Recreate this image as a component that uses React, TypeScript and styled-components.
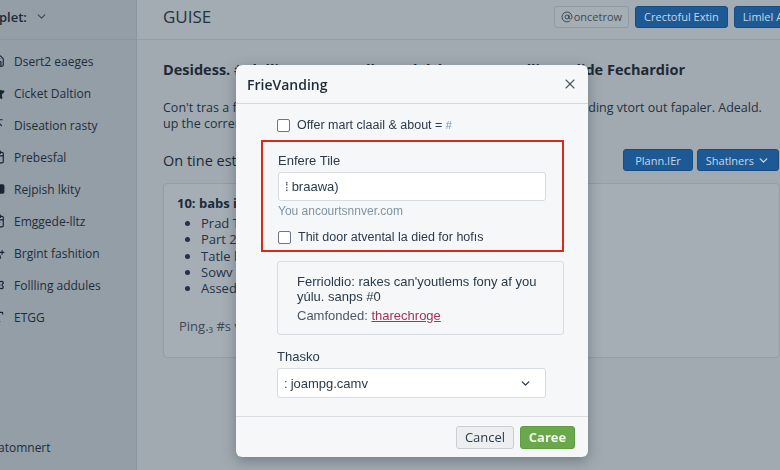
import React from "react";
import styled, { createGlobalStyle } from "styled-components";
import {
  Save,
  Star,
  ArrowUpToLine,
  Calendar,
  CreditCard,
  CalendarCheck,
  UserPlus,
  Settings,
  Type,
  ChevronDown,
  X,
  AtSign,
} from "lucide-react";

const GlobalStyle = createGlobalStyle`
  html, body {
    margin: 0;
    padding: 0;
    width: 780px;
    height: 470px;
    overflow: hidden;
  }
  body {
    font-family: "Open Sans", "Noto Sans", sans-serif;
    color: #1f2b36;
  }
  * { box-sizing: border-box; }
`;

const navItems = [
  { icon: Save, label: "Dsert2 eaeges" },
  { icon: Star, label: "Cicket Daltion", fill: true },
  { icon: ArrowUpToLine, label: "Diseation rasty" },
  { icon: Calendar, label: "Prebesfal" },
  { icon: CreditCard, label: "Rejpish lkity", fill: true },
  { icon: CalendarCheck, label: "Emggede-lltz" },
  { icon: UserPlus, label: "Brgint fashition" },
  { icon: Settings, label: "Follling addules" },
  { icon: Type, label: "ETGG" },
];

const listItems = ["Prad Tlimest", "Part 2 iasd", "Tatle lmed", "Sowv", "Assed opert"];

const App = () => {
  return (
    <>
      <GlobalStyle />
      <Page>
        <Sidebar>
          <SideHeader>
            plet:
            <ChevronDown size={13} strokeWidth={2} />
          </SideHeader>
          <Nav>
            {navItems.map((item) => {
              const Icon = item.icon;
              return (
                <NavItem key={item.label}>
                  <Icon
                    size={14}
                    strokeWidth={2}
                    fill={item.fill ? "currentColor" : "none"}
                  />
                  <span>{item.label}</span>
                </NavItem>
              );
            })}
          </Nav>
          <SideFooter>atomnert</SideFooter>
        </Sidebar>

        <Main>
          <TopBar>
            <PageTitle>GUISE</PageTitle>
            <TopActions>
              <GhostButton>
                <AtSign size={12} strokeWidth={2} />
                oncetrow
              </GhostButton>
              <PrimaryButton>Crectoful Extin</PrimaryButton>
              <PrimaryButton>Limlel Adsen</PrimaryButton>
            </TopActions>
          </TopBar>

          <Content>
            <Heading>
              Desidess. #Cl dlisnurs cw sttlhe asd dsbm Ctsmt Adlita Kvlide Fechardior
            </Heading>
            <Paragraph>
              Con't tras a far ahest lisndes ans fre out in cortanced cantiun tos
              stey soading vtort out fapaler. Adeald. up the corrert tsilles.
            </Paragraph>

            <SectionRow>
              <SubHeading>On tine estables</SubHeading>
              <SectionActions>
                <PrimaryButton $wide>Plann.IEr</PrimaryButton>
                <PrimaryButton>
                  Shatlners
                  <ChevronDown size={13} strokeWidth={2.5} />
                </PrimaryButton>
              </SectionActions>
            </SectionRow>

            <Card>
              <CardTitle>10: babs in ecrtar</CardTitle>
              <BulletList>
                {listItems.map((t) => (
                  <li key={t}>{t}</li>
                ))}
              </BulletList>
              <CardNote>Ping.₃ #s vlaetls</CardNote>
            </Card>
          </Content>
        </Main>

        <Backdrop>
          <Modal>
            <ModalHeader>
              <ModalTitle>FrieVanding</ModalTitle>
              <CloseButton>
                <X size={16} strokeWidth={1.6} />
              </CloseButton>
            </ModalHeader>

            <ModalBody>
              <CheckRow>
                <CheckBox />
                <span>
                  Offer mart claail &amp; about = <Faint>#</Faint>
                </span>
              </CheckRow>

              <Highlight>
                <FieldLabel>Enfere Tile</FieldLabel>
                <TextInput>
                  <Caret>⁞</Caret>braawa)
                </TextInput>
                <Helper>You ancourtsnnver.com</Helper>
                <CheckRow $tight>
                  <CheckBox />
                  <span>Thit door atvental la died for hofıs</span>
                </CheckRow>
              </Highlight>

              <InfoBox>
                <InfoText>
                  Ferrioldio: rakes can'youtlems fony af you
                  <br />
                  yúlu. sanps #0
                </InfoText>
                <InfoMeta>
                  Camfonded: <InfoLink>tharechroge</InfoLink>
                </InfoMeta>
              </InfoBox>

              <FieldLabel $spaced>Thasko</FieldLabel>
              <SelectBox>
                <span>
                  <Caret>:</Caret>joampg.camv
                </span>
                <ChevronDown size={13} strokeWidth={2.5} />
              </SelectBox>
            </ModalBody>

            <ModalFooter>
              <CancelButton>Cancel</CancelButton>
              <ConfirmButton>Caree</ConfirmButton>
            </ModalFooter>
          </Modal>
        </Backdrop>
      </Page>
    </>
  );
};

export default App;

const Page = styled.div`
  display: flex;
  width: 780px;
  height: 470px;
  overflow: hidden;
  background: #a1aab1;
`;

const Sidebar = styled.aside`
  display: flex;
  flex-direction: column;
  width: 137px;
  flex-shrink: 0;
  background: #939ea7;
  border-right: 1px solid #8a959e;
`;

const SideHeader = styled.div`
  display: flex;
  align-items: center;
  gap: 8px;
  height: 40px;
  padding-bottom: 6px;
  margin-left: -1px;
  border-bottom: 1px solid #8a959e;
  font-size: 13px;
  font-weight: 600;
  color: #1d2935;

  svg {
    color: #34495e;
  }
`;

const Nav = styled.nav`
  display: flex;
  flex-direction: column;
  padding-top: 5px;
  margin-left: -9px;
`;

const NavItem = styled.div`
  display: flex;
  align-items: center;
  gap: 9px;
  height: 32px;
  font-size: 12px;
  color: #1f2d3a;

  svg {
    flex-shrink: 0;
    color: #1a2430;
  }
`;

const SideFooter = styled.div`
  margin-top: auto;
  margin-left: -2px;
  padding-bottom: 14px;
  font-size: 12px;
  color: #1f2d3a;
`;

const Main = styled.main`
  flex: 1;
  display: flex;
  flex-direction: column;
  min-width: 0;
`;

const TopBar = styled.header`
  display: flex;
  align-items: center;
  justify-content: space-between;
  height: 40px;
  padding: 0 0 6px 26px;
  border-bottom: 1px solid #959fa7;
  background: #a3acb3;
`;

const PageTitle = styled.h1`
  margin: 0;
  font-size: 17px;
  font-weight: 500;
  color: #26323d;
`;

const TopActions = styled.div`
  display: flex;
  gap: 6px;
  margin-right: -37px;
`;

const PrimaryButton = styled.button<{ $wide?: boolean }>`
  display: inline-flex;
  align-items: center;
  gap: 3px;
  height: 22px;
  padding: ${({ $wide }) => ($wide ? "0 11px" : "0 8px")};
  border: 1px solid #154c82;
  border-radius: 3px;
  background: #1d5a95;
  color: #c9d6e3;
  font-family: "Open Sans", sans-serif;
  font-size: 11px;
  white-space: nowrap;
`;

const GhostButton = styled(PrimaryButton)`
  gap: 1px;
  padding: 0 6px 0 6px;
  border-color: #8f9aa3;
  background: #a5aeb5;
  color: #3d4a56;
`;

const Content = styled.section`
  display: flex;
  flex-direction: column;
  padding: 20px 0 0 26px;
`;

const Heading = styled.h2`
  margin: 0;
  font-size: 14.5px;
  font-weight: 700;
  color: #1d2935;
  white-space: nowrap;
`;

const Paragraph = styled.p`
  margin: 21px 0 0;
  width: 606px;
  font-size: 12.5px;
  line-height: 16px;
  color: #243140;
`;

const SectionRow = styled.div`
  display: flex;
  align-items: center;
  justify-content: space-between;
  margin-top: 17px;
`;

const SubHeading = styled.h3`
  margin: 0;
  font-size: 14.5px;
  font-weight: 500;
  color: #1d2935;
`;

const SectionActions = styled.div`
  display: flex;
  gap: 4px;
  margin-right: 1px;
`;

const Card = styled.div`
  display: flex;
  flex-direction: column;
  height: 175px;
  margin-top: 12px;
  padding: 10px 13px 0;
  border: 1px solid #939da5;
  border-radius: 4px;
  background: #a5aeb5;
`;

const CardTitle = styled.div`
  font-size: 13px;
  font-weight: 700;
  color: #1d2935;
`;

const BulletList = styled.ul`
  margin: 3px 0 0;
  padding-left: 24px;
  font-size: 13px;
  line-height: 16.3px;
  color: #22324a;
`;

const CardNote = styled.div`
  margin-top: 21px;
  padding-left: 2px;
  font-size: 13px;
  color: #3b4855;
`;

const Backdrop = styled.div`
  position: fixed;
  inset: 0;
  display: flex;
  align-items: flex-start;
  padding: 65px 0 0 236px;
`;

const Modal = styled.div`
  display: flex;
  flex-direction: column;
  width: 352px;
  height: 392px;
  border-radius: 6px;
  background: #f5f7f9;
  box-shadow: 0 4px 14px rgba(30, 40, 50, 0.35);
  font-family: "Liberation Sans", Arial, sans-serif;
  color: #2a3a48;
  overflow: hidden;
`;

const ModalHeader = styled.div`
  display: flex;
  align-items: center;
  justify-content: space-between;
  height: 39px;
  padding: 0 10px 0 11px;
  border-bottom: 1px solid #d3d9de;
`;

const ModalTitle = styled.div`
  font-family: "Open Sans", sans-serif;
  font-size: 14px;
  font-weight: 600;
  color: #1e2a36;
`;

const CloseButton = styled.button`
  display: flex;
  padding: 0;
  border: none;
  background: none;
  color: #4a5560;
`;

const ModalBody = styled.div`
  display: flex;
  flex-direction: column;
  flex: 1;
  padding: 13px 24px 0 25px;
`;

const CheckRow = styled.label<{ $tight?: boolean }>`
  display: flex;
  align-items: center;
  gap: 7px;
  height: 16px;
  margin: ${({ $tight }) => ($tight ? "11px 0 0" : "0 0 7px 16px")};
  font-size: 12.5px;
  color: #2b3b4a;
`;

const CheckBox = styled.span`
  width: 13px;
  height: 13px;
  flex-shrink: 0;
  border: 1.5px solid #6b7783;
  border-radius: 2px;
  background: #fff;
`;

const Faint = styled.span`
  color: #7d93a8;
  font-size: 11px;
`;

const Highlight = styled.div`
  display: flex;
  flex-direction: column;
  height: 112px;
  padding: 11px 15px 0 15px;
  border: 2px solid #d92a1c;
`;

const FieldLabel = styled.div<{ $spaced?: boolean }>`
  font-size: 13px;
  color: #2b3b4a;
  margin: ${({ $spaced }) => ($spaced ? "14px 0 0 16px" : "0")};
`;

const TextInput = styled.div`
  display: flex;
  align-items: center;
  width: 268px;
  height: 29px;
  margin-top: 4px;
  padding-left: 6px;
  border: 1px solid #d6dce1;
  border-radius: 3px;
  background: #fff;
  font-size: 13px;
  color: #2b3b4a;
`;

const Caret = styled.span`
  margin-right: 3px;
  color: #3d4954;
`;

const Helper = styled.div`
  margin-top: 3px;
  font-size: 12px;
  color: #7c95a6;
`;

const InfoBox = styled.div`
  display: flex;
  flex-direction: column;
  height: 74px;
  margin: 9px 0 0 16px;
  padding: 12px 0 0 19px;
  border: 1px solid #d6dce1;
  border-radius: 3px;
  font-size: 13px;
  color: #2b3b4a;
`;

const InfoText = styled.div`
  line-height: 15px;
`;

const InfoMeta = styled.div`
  margin-top: 4px;
  color: #4b5966;
`;

const InfoLink = styled.span`
  color: #a0355b;
  text-decoration: underline;
`;

const SelectBox = styled.div`
  display: flex;
  align-items: center;
  justify-content: space-between;
  width: 269px;
  height: 30px;
  margin: 4px 0 0 16px;
  padding: 0 13px 0 6px;
  border: 1px solid #d6dce1;
  border-radius: 3px;
  background: #fff;
  font-size: 13px;
  color: #2b3b4a;

  svg {
    color: #2b3b4a;
  }
`;

const ModalFooter = styled.div`
  display: flex;
  align-items: center;
  justify-content: flex-end;
  gap: 6px;
  height: 41px;
  padding: 0 13px 0 0;
  border-top: 1px solid #d9dee2;
`;

const CancelButton = styled.button`
  height: 23px;
  width: 58px;
  border: 1px solid #c9cfd4;
  border-radius: 3px;
  background: #eceef0;
  font-family: "Open Sans", sans-serif;
  font-size: 13px;
  color: #2b3b4a;
`;

const ConfirmButton = styled.button`
  height: 23px;
  width: 55px;
  border: 1px solid #5f9c42;
  border-radius: 3px;
  background: #6aa84b;
  font-family: "Open Sans", sans-serif;
  font-size: 13px;
  font-weight: 700;
  color: #eef6e8;
`;
